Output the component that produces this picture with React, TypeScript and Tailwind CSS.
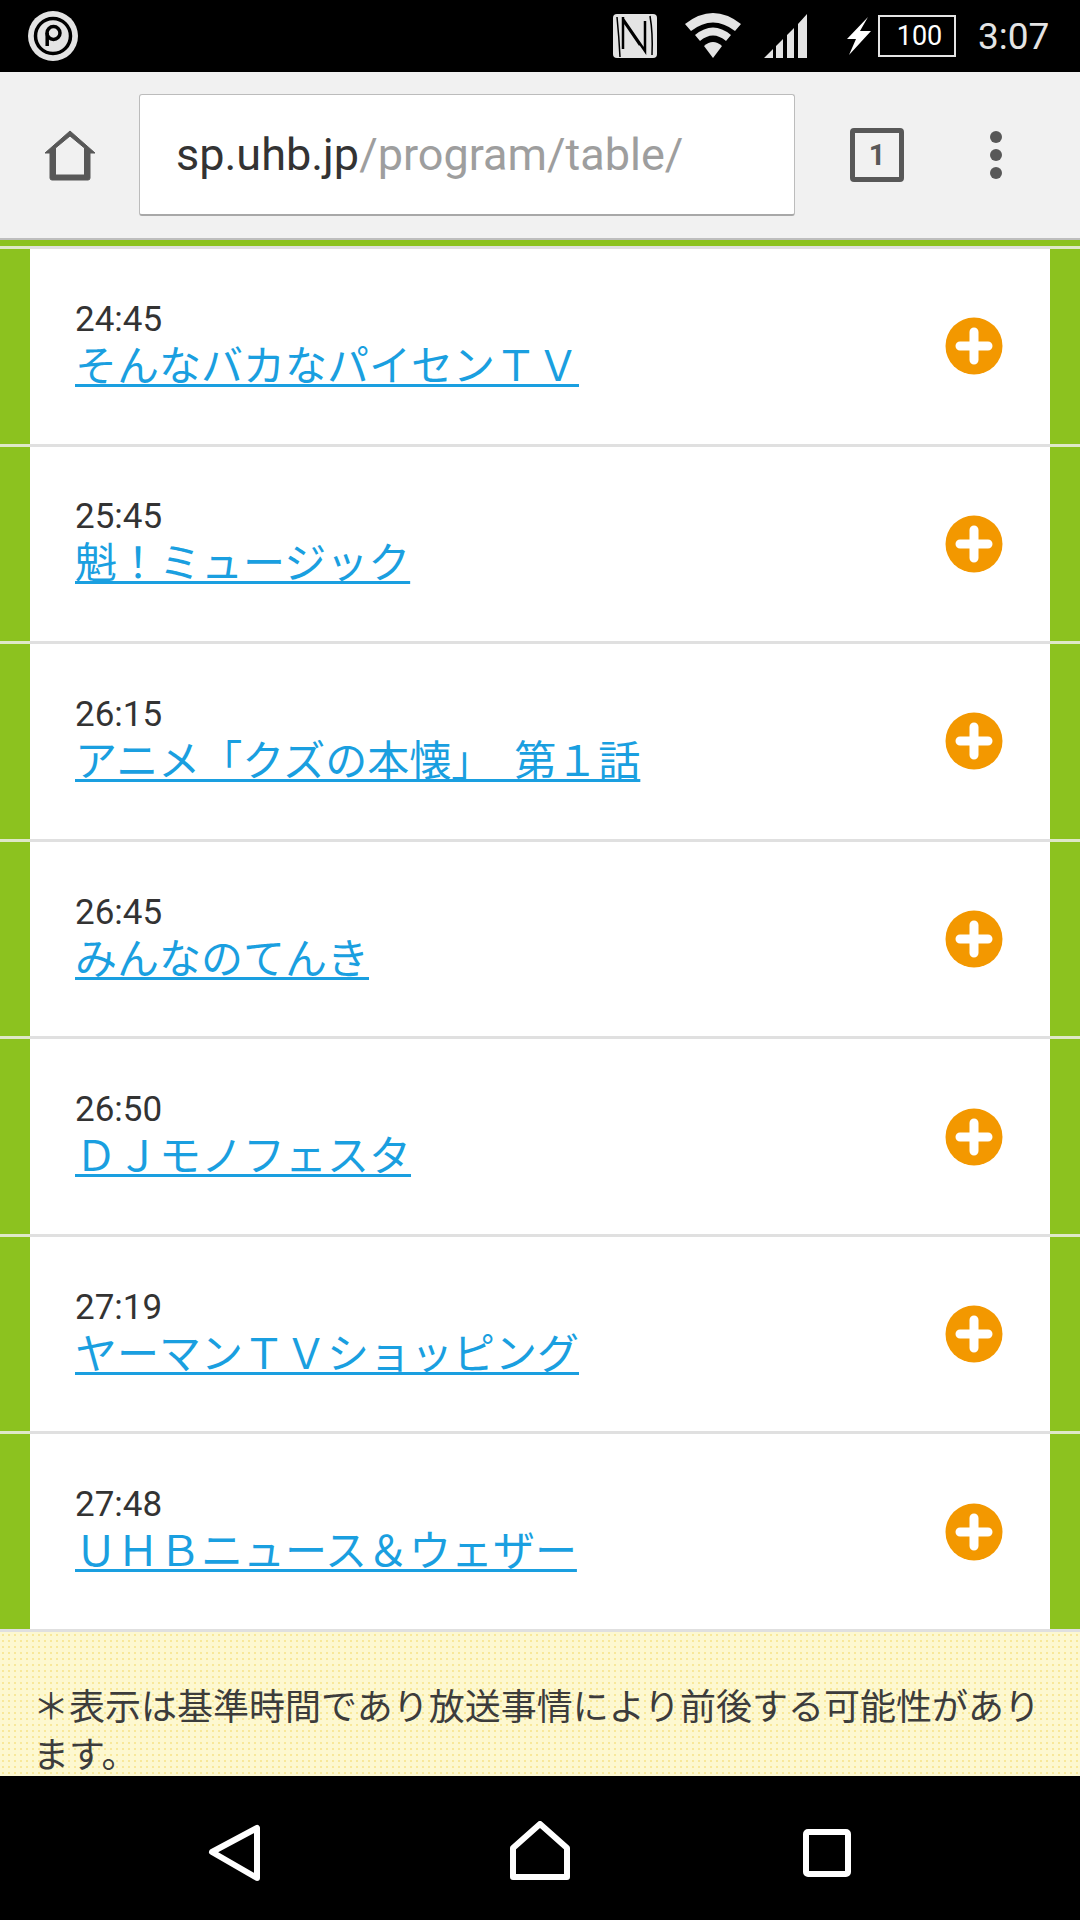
import React from "react";

const programs = [
  { time: "24:45", title: "そんなバカなパイセンＴＶ" },
  { time: "25:45", title: "魁！ミュージック" },
  { time: "26:15", title: "アニメ「クズの本懐」　第１話" },
  { time: "26:45", title: "みんなのてんき" },
  { time: "26:50", title: "ＤＪモノフェスタ" },
  { time: "27:19", title: "ヤーマンＴＶショッピング" },
  { time: "27:48", title: "ＵＨＢニュース＆ウェザー" },
];

function StatusBar() {
  return (
    <div className="h-[72px] bg-black flex items-center pl-[28px] pr-[24px] text-[#e4e4e4]">
      <svg width="50" height="50" viewBox="0 0 50 50">
        <circle cx="25" cy="25" r="25" fill="#e4e4e4" />
        <circle cx="25" cy="25" r="17.5" fill="none" stroke="#000" strokeWidth="3.5" />
        <circle cx="25.5" cy="22" r="6.5" fill="none" stroke="#000" strokeWidth="3.5" />
        <path d="M19.2 22v13" stroke="#000" strokeWidth="3.5" fill="none" />
      </svg>
      <div className="ml-auto flex items-center">
        <svg width="46" height="46" viewBox="0 0 46 46">
          <rect x="1" y="1" width="44" height="44" rx="4" fill="#e4e4e4" />
          <path d="M11 4 L11 36 M11 6 L33 38 L33 8 M13 10 L28 32" stroke="#000" strokeWidth="2.5" fill="none" />
          <path d="M5 4 Q7 24 8 44 M38 3 Q41 20 40 42" stroke="#000" strokeWidth="1.5" fill="none" />
        </svg>
        <svg width="58" height="50" viewBox="0 0 58 50" className="ml-[26px]">
          <path d="M1 13 Q29 -9 57 13 L51 20 Q29 3 7 20 Z" fill="#e4e4e4" />
          <path d="M11 24 Q29 9 47 24 L42 30 Q29 19 16 30 Z" fill="#e4e4e4" />
          <path d="M20 35 Q29 27 38 35 L29 47 Z" fill="#e4e4e4" />
        </svg>
        <svg width="44" height="46" viewBox="0 0 44 46" className="ml-[22px]">
          <path d="M0 45 L9 36 V45 Z M12 33 L19 26 V45 H12 Z M23 22 L30 15 V45 H23 Z M34 11 L43 1 V45 H34 Z" fill="#e4e4e4" />
        </svg>
        <svg width="24" height="38" viewBox="0 0 24 38" className="ml-[39px]">
          <path d="M21 0 L0 22 H9 L2 38 L24 14 H13 Z" fill="#fff" />
        </svg>
        <div className="ml-[7px] relative w-[78px] h-[42px] border-2 border-[#e4e4e4] flex items-center justify-center bg-black">
          <span className="font-['Roboto',sans-serif] text-[27px] leading-none text-white pl-[5px]">100</span>
        </div>
        <span className="ml-[22px] w-[78px] font-['Roboto',sans-serif] text-[37px] leading-none text-[#e4e4e4]">3:07</span>
      </div>
    </div>
  );
}

function Toolbar() {
  return (
    <div className="h-[168px] bg-[#f1f1f1] flex items-center relative z-10 border-b-2 border-[#bdbdbd]">
      <div className="w-[139px] flex justify-center shrink-0">
        <svg width="54" height="56" viewBox="0 0 54 56">
          <path d="M7 50 V25 H2 L27 3 L52 25 H47 V50 Q47 52 45 52 H9 Q7 52 7 50 Z M12.500 47 H41.500 V20 L27 8 L12.500 20 Z" fill="#585858" stroke="#585858" strokeWidth="1" strokeLinejoin="round" transform="translate(0 1)" />
        </svg>
      </div>
      <div className="w-[656px] h-[122px] bg-white rounded-[3px] border border-[#bcbcbc] border-b-2 border-b-[#a8a8a8] flex items-center pl-[36px] font-['Roboto',sans-serif] text-[45px] leading-none shrink-0 -mt-px">
        <span className="text-[#333333]">sp.uhb.jp</span>
        <span className="text-[#9e9e9e]">/program/table/</span>
      </div>
      <div className="ml-[55px] w-[54px] h-[54px] border-[5px] border-[#585858] rounded-[4px] flex items-center justify-center font-['Roboto',sans-serif] font-bold text-[29px] leading-none text-[#585858]">1</div>
      <div className="ml-[86px] flex flex-col gap-[6px]">
        <div className="w-[12px] h-[12px] rounded-full bg-[#585858]" />
        <div className="w-[12px] h-[12px] rounded-full bg-[#585858]" />
        <div className="w-[12px] h-[12px] rounded-full bg-[#585858]" />
      </div>
    </div>
  );
}

function PlusIcon() {
  return (
    <svg width="58" height="58" viewBox="0 0 58 58">
      <circle cx="29" cy="29" r="28.500" fill="#f39800" />
      <path d="M29 15 V43 M15 29 H43" stroke="#fff" strokeWidth="9" strokeLinecap="round" />
    </svg>
  );
}

function ProgramRow({ time, title }: { time: string; title: string }) {
  return (
    <div className="h-[198px] border-t-[3px] border-[#e0e0e0] bg-white mx-[30px] flex items-center relative">
      <div className="absolute left-[-30px] w-[30px] top-[-3px] h-[3px] bg-[#dfe8c8]" />
      <div className="absolute right-[-30px] w-[30px] top-[-3px] h-[3px] bg-[#dfe8c8]" />
      <div className="pl-[45px] flex-1 min-w-0 -mt-[3px]">
        <div className="font-['Roboto','Noto_Sans_CJK_JP',sans-serif] text-[35px] leading-[44px] text-[#333333]">{time}</div>
        <a className="block w-fit font-['Roboto','Noto_Sans_CJK_JP',sans-serif] text-[42px] leading-[50px] text-[#1a9fe0] underline decoration-[3px] underline-offset-[3px]">{title}</a>
      </div>
      <div className="pr-[47px]">
        <PlusIcon />
      </div>
    </div>
  );
}

function NavBar() {
  return (
    <div className="h-[144px] bg-black flex items-start relative">
      <svg width="54" height="60" viewBox="0 0 54 60" className="ml-[207px] mt-[48px]">
        <path d="M50 4 V54 L5 28 Z" fill="none" stroke="#fff" strokeWidth="6" strokeLinejoin="round" />
      </svg>
      <svg width="60" height="60" viewBox="0 0 60 60" className="ml-[249px] mt-[45px]">
        <path d="M3 56 V27 L30 3 L57 27 V56 Z" fill="none" stroke="#fff" strokeWidth="6" strokeLinejoin="round" />
      </svg>
      <svg width="48" height="48" viewBox="0 0 48 48" className="ml-[233px] mt-[53px]">
        <rect x="3" y="3" width="42" height="42" rx="2" fill="none" stroke="#fff" strokeWidth="6" />
      </svg>
    </div>
  );
}

export default function App() {
  return (
    <div className="w-[1080px] h-[1920px] overflow-hidden flex flex-col bg-white">
      <StatusBar />
      <Toolbar />
      <div className="h-[1536px] flex flex-col overflow-hidden bg-[#8cc21f] pt-[6px] shrink-0">
        <div className="bg-white h-[0px]" />
        {programs.map((p) => (
          <ProgramRow key={p.time} time={p.time} title={p.title} />
        ))}
        <div className="flex-1 border-t-[3px] border-[#e0e0e0] bg-[#fdf8d0] bg-[radial-gradient(#f8e89a_1.2px,transparent_1.3px)] bg-[length:6px_6px] pt-[48px] px-[33px] font-['Noto_Sans_CJK_JP',sans-serif] text-[36px] leading-[48px] text-[#3c3c3c]">
          ＊表示は基準時間であり放送事情により前後する可能性があります。
        </div>
      </div>
      <NavBar />
    </div>
  );
}
